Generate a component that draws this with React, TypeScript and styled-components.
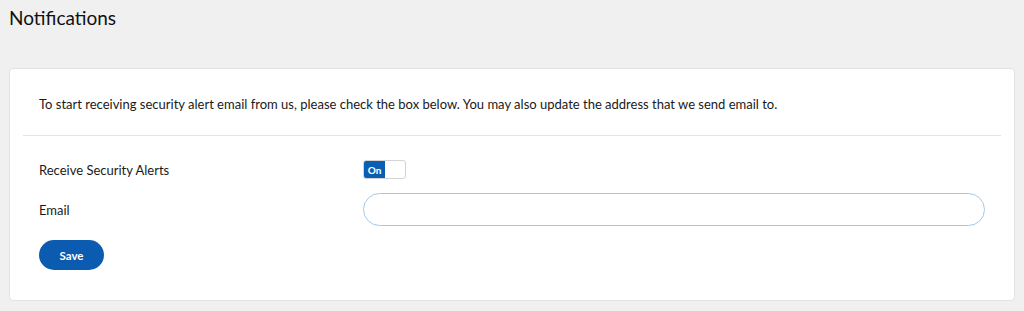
import React, { useState } from 'react';
import styled, { createGlobalStyle } from 'styled-components';

const GlobalStyle = createGlobalStyle`
    html, body {
        margin: 0;
        padding: 0;
        background: #f0f0f0;
        font-family: Lato, "Open Sans", sans-serif;
        color: #1a1a1a;
    }
`

const Page = styled.div`
    padding: 0 9px 10px 9px;
`

const Title = styled.h1`
    margin: 0;
    padding-top: 6px;
    height: 62px;
    font-size: 19px;
    font-weight: 400;
    color: #111;
`

const Card = styled.div`
    background: #fff;
    border: 1px solid #e2e2e2;
    border-radius: 4px;
    height: 233px;
    box-sizing: border-box;
`

const Intro = styled.p`
    margin: 0;
    padding: 27px 29px 0 29px;
    height: 66px;
    box-sizing: border-box;
    font-size: 13px;
`

const Divider = styled.hr`
    margin: 0 13px;
    border: none;
    border-top: 1px solid #e4e4e4;
`

const Form = styled.div`
    padding: 23px 30px 0 29px;
    display: flex;
    flex-direction: column;
`

const Row = styled.div<{ $height: number }>`
    display: grid;
    grid-template-columns: 324px 1fr;
    align-items: center;
    height: ${p => p.$height}px;
    font-size: 13px;
`

const Toggle = styled.button`
    display: flex;
    width: 43px;
    height: 19px;
    padding: 0;
    border: 1px solid #d4d4d4;
    border-radius: 3px;
    background: #fff;
    overflow: hidden;
    cursor: pointer;
`

const ToggleOn = styled.span`
    width: 21px;
    height: 100%;
    background: #0b5fb3;
    color: #fff;
    font-family: Lato, sans-serif;
    font-size: 10px;
    font-weight: 700;
    display: flex;
    align-items: center;
    justify-content: center;
`

const Input = styled.input`
    width: 622px;
    height: 33px;
    box-sizing: border-box;
    border: 1px solid #a8c7e6;
    border-radius: 17px;
    padding: 0 8px;
    font-family: inherit;
    font-size: 14px;
    outline: none;
    caret-color: #555;
`

const SaveButton = styled.button`
    margin-top: 1px;
    width: 65px;
    height: 30px;
    border: none;
    border-radius: 15px;
    background: #0b5cb0;
    color: #fff;
    font-family: Lato, sans-serif;
    font-size: 11.5px;
    font-weight: 700;
    cursor: pointer;
`

export default function App() {
    const [enabled, setEnabled] = useState(true);
    const [email, setEmail] = useState('');

    return (
        <Page>
            <GlobalStyle />
            <Title>Notifications</Title>
            <Card>
                <Intro>To start receiving security alert email from us, please check the box below. You may also update the address that we send email to.</Intro>
                <Divider />
                <Form>
                    <Row $height={21}>
                        <span>Receive Security Alerts</span>
                        <Toggle onClick={() => setEnabled(!enabled)}>
                            <ToggleOn>{enabled ? 'On' : ''}</ToggleOn>
                        </Toggle>
                    </Row>
                    <Row $height={59}>
                        <span>Email</span>
                        <Input value={email} onChange={e => setEmail(e.target.value)} autoFocus />
                    </Row>
                    <div>
                        <SaveButton>Save</SaveButton>
                    </div>
                </Form>
            </Card>
        </Page>
    );
}
